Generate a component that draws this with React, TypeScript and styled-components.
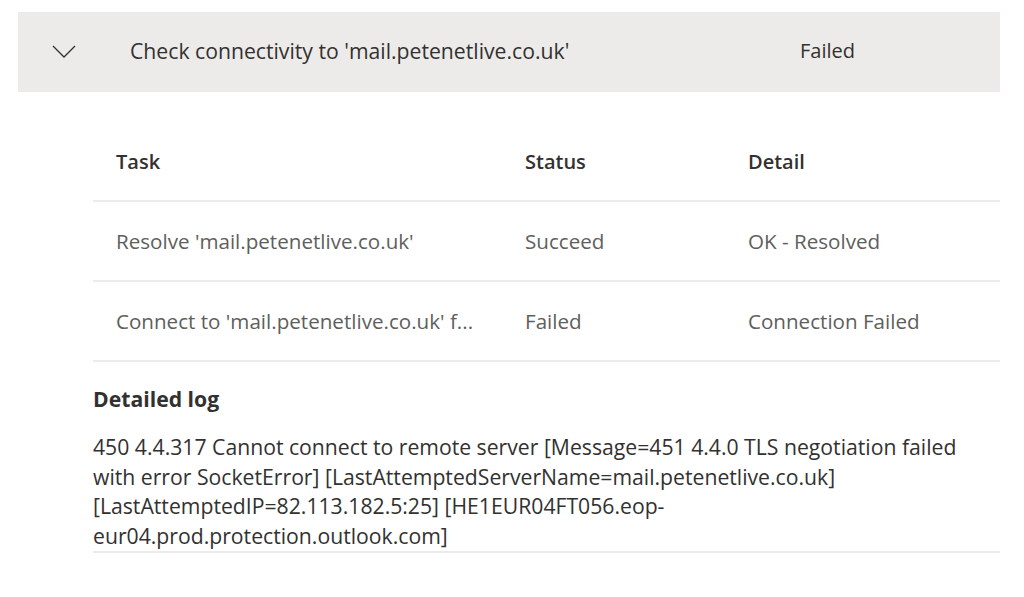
import styled, { createGlobalStyle } from 'styled-components';

const GlobalStyle = createGlobalStyle`
  html, body {
    margin: 0;
    padding: 0;
    background: #ffffff;
  }
  body {
    font-family: 'Open Sans', 'Noto Sans', Arial, sans-serif;
    color: #323130;
    -webkit-font-smoothing: antialiased;
  }
`;

const Page = styled.main`
  padding: 12px 24px 0 18px;
`;

const HeaderBar = styled.div`
  display: grid;
  grid-template-columns: 112px 670px 1fr;
  align-items: center;
  height: 80px;
  background: #edebe9;
  font-size: 20px;
  color: #323130;
`;

const Chevron = styled.span`
  display: flex;
  padding-left: 34px;
  color: #323130;
`;

const HeaderTitle = styled.span`
  font-size: 21.2px;
  white-space: nowrap;
  margin-top: -3px;
`;

const HeaderStatus = styled.span`
  margin-top: -3px;
`;

const Body = styled.section`
  margin-left: 75px;
  padding-top: 30px;
`;

const Row = styled.div<{ $head?: boolean }>`
  display: grid;
  grid-template-columns: 432px 223px 1fr;
  align-items: center;
  height: 80px;
  border-bottom: 2px solid #edebe9;
  box-sizing: border-box;
  font-size: ${({ $head }) => ($head ? '20px' : '20.6px')};
  font-weight: ${({ $head }) => ($head ? 600 : 400)};
  color: ${({ $head }) => ($head ? '#323130' : '#605e5c')};
`;

const Cell = styled.div<{ $first?: boolean }>`
  padding-left: ${({ $first }) => ($first ? '23px' : '0')};
  white-space: nowrap;
  overflow: hidden;
  text-overflow: ellipsis;
`;

const LogSection = styled.div`
  border-bottom: 2px solid #edebe9;
`;

const LogTitle = styled.h3`
  margin: 22px 0 0;
  font-size: 21.2px;
  font-weight: 700;
  line-height: 30px;
  color: #323130;
`;

const LogText = styled.p`
  margin: 18px 0 0;
  padding: 0 20px 0 0;
  font-size: 21.2px;
  line-height: 29.7px;
  color: #323130;
`;

const rows = [
  { task: "Resolve 'mail.petenetlive.co.uk'", status: 'Succeed', detail: 'OK - Resolved' },
  { task: "Connect to 'mail.petenetlive.co.uk' f...", status: 'Failed', detail: 'Connection Failed' },
];

export default function App() {
  return (
    <>
      <GlobalStyle />
      <Page>
        <HeaderBar>
          <Chevron>
            <svg width="24" height="14" viewBox="0 0 24 14" fill="none">
              <polyline points="1,1 12,12 23,1" stroke="currentColor" strokeWidth="1.3" />
            </svg>
          </Chevron>
          <HeaderTitle>Check connectivity to 'mail.petenetlive.co.uk'</HeaderTitle>
          <HeaderStatus>Failed</HeaderStatus>
        </HeaderBar>

        <Body>
          <Row $head>
            <Cell $first>Task</Cell>
            <Cell>Status</Cell>
            <Cell>Detail</Cell>
          </Row>
          {rows.map((r) => (
            <Row key={r.task}>
              <Cell $first>{r.task}</Cell>
              <Cell>{r.status}</Cell>
              <Cell>{r.detail}</Cell>
            </Row>
          ))}

          <LogSection>
            <LogTitle>Detailed log</LogTitle>
            <LogText>
              450 4.4.317 Cannot connect to remote server [Message=451 4.4.0 TLS negotiation failed
              with error SocketError] [LastAttemptedServerName=mail.petenetlive.co.uk]
              [LastAttemptedIP=82.113.182.5:25] [HE1EUR04FT056.eop-eur04.prod.protection.outlook.com]
            </LogText>
          </LogSection>
        </Body>
      </Page>
    </>
  );
}
